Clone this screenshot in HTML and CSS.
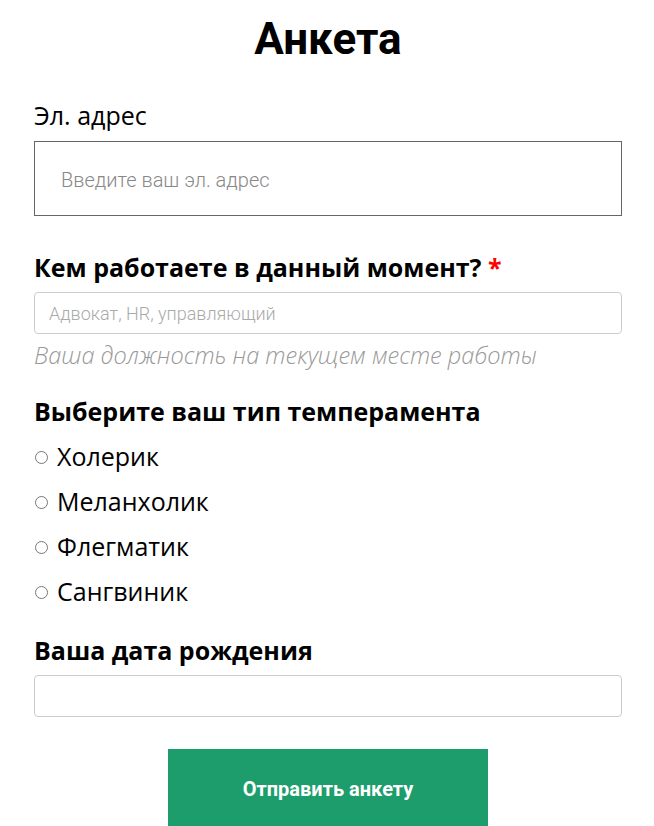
FILE: index.html
```html
<!DOCTYPE html>
<html lang="ru">

<head>
    <meta charset="utf-8">
    <meta name="viewport" content="width=device-width, initial-scale=1.0">

    <title>Анкета</title>

    <link rel="stylesheet" href="styles.css">

</head>

<body>
    <form class="anketa">
        <h1 class="titel">Анкета</h1>

        <label class="felt-navn" for="email">Эл. адрес</label>
        <input class="email" id="email" type="email" placeholder="Введите ваш эл. адрес">

        <label class="felt-navn fed" for="job">Кем работаете в данный момент? <span class="krav">*</span></label>
        <input class="tekst" id="job" type="text" placeholder="Адвокат, HR, управляющий">
        <p class="hjelp">Ваша должность на текущем месте работы</p>

        <p class="felt-navn fed gruppe">Выберите ваш тип темперамента</p>
        <label class="valg"><input type="radio" name="temp"> Холерик</label>
        <label class="valg"><input type="radio" name="temp"> Меланхолик</label>
        <label class="valg"><input type="radio" name="temp"> Флегматик</label>
        <label class="valg"><input type="radio" name="temp"> Сангвиник</label>

        <label class="felt-navn fed dato-navn" for="dato">Ваша дата рождения</label>
        <input class="tekst" id="dato" type="text">

        <button class="send" type="submit">Отправить анкету</button>
    </form>
</body>

</html>
```

FILE: styles.css
```css
body {
    margin: 0;
    background: #fff;
    font-family: "Open Sans", "Liberation Sans", sans-serif;
    color: #000;
}

.anketa {
    width: 588px;
    margin: 0 0 0 34px;
    display: flex;
    flex-direction: column;
}

.titel {
    font-family: Roboto, "Liberation Sans", sans-serif;
    font-weight: 700;
    font-size: 44px;
    line-height: 54px;
    text-align: center;
    margin: 12px 0 34px;
}

.felt-navn {
    font-size: 25px;
    line-height: 30px;
    margin: 0 0 10px;
}

.fed {
    font-weight: 700;
}

.gruppe {
    margin-bottom: 7px;
}

.krav {
    color: #f00;
}

.email {
    box-sizing: border-box;
    height: 75px;
    border: 1px solid #666;
    padding: 2px 26px 0;
    font-family: Roboto, sans-serif;
    font-weight: 300;
    font-size: 20px;
    margin: 1px 0 36px;
}

.email::placeholder {
    color: #888;
}

.tekst {
    box-sizing: border-box;
    height: 42px;
    border: 1px solid #ccc;
    border-radius: 4px;
    padding: 0 14px;
    font-family: Roboto, sans-serif;
    font-weight: 300;
    font-size: 18px;
}

.tekst::placeholder {
    color: #aaa;
}

.hjelp {
    font-style: italic;
    font-weight: 300;
    font-size: 23.6px;
    line-height: 30px;
    color: #999;
    margin: 6px 0 26px;
}

.valg {
    display: flex;
    align-items: center;
    font-size: 25px;
    line-height: 30px;
    height: 45px;
}

.valg input {
    margin: 3px 9px 0 1px;
    width: 13px;
    height: 13px;
}

.dato-navn {
    margin-top: 22px;
    margin-bottom: 10px;
}

.send {
    align-self: center;
    width: 320px;
    height: 80px;
    margin-top: 32px;
    border: none;
    background: #1c9d6b;
    color: #fff;
    font-family: Roboto, sans-serif;
    font-weight: 700;
    font-size: 20px;
    cursor: pointer;
}
```
